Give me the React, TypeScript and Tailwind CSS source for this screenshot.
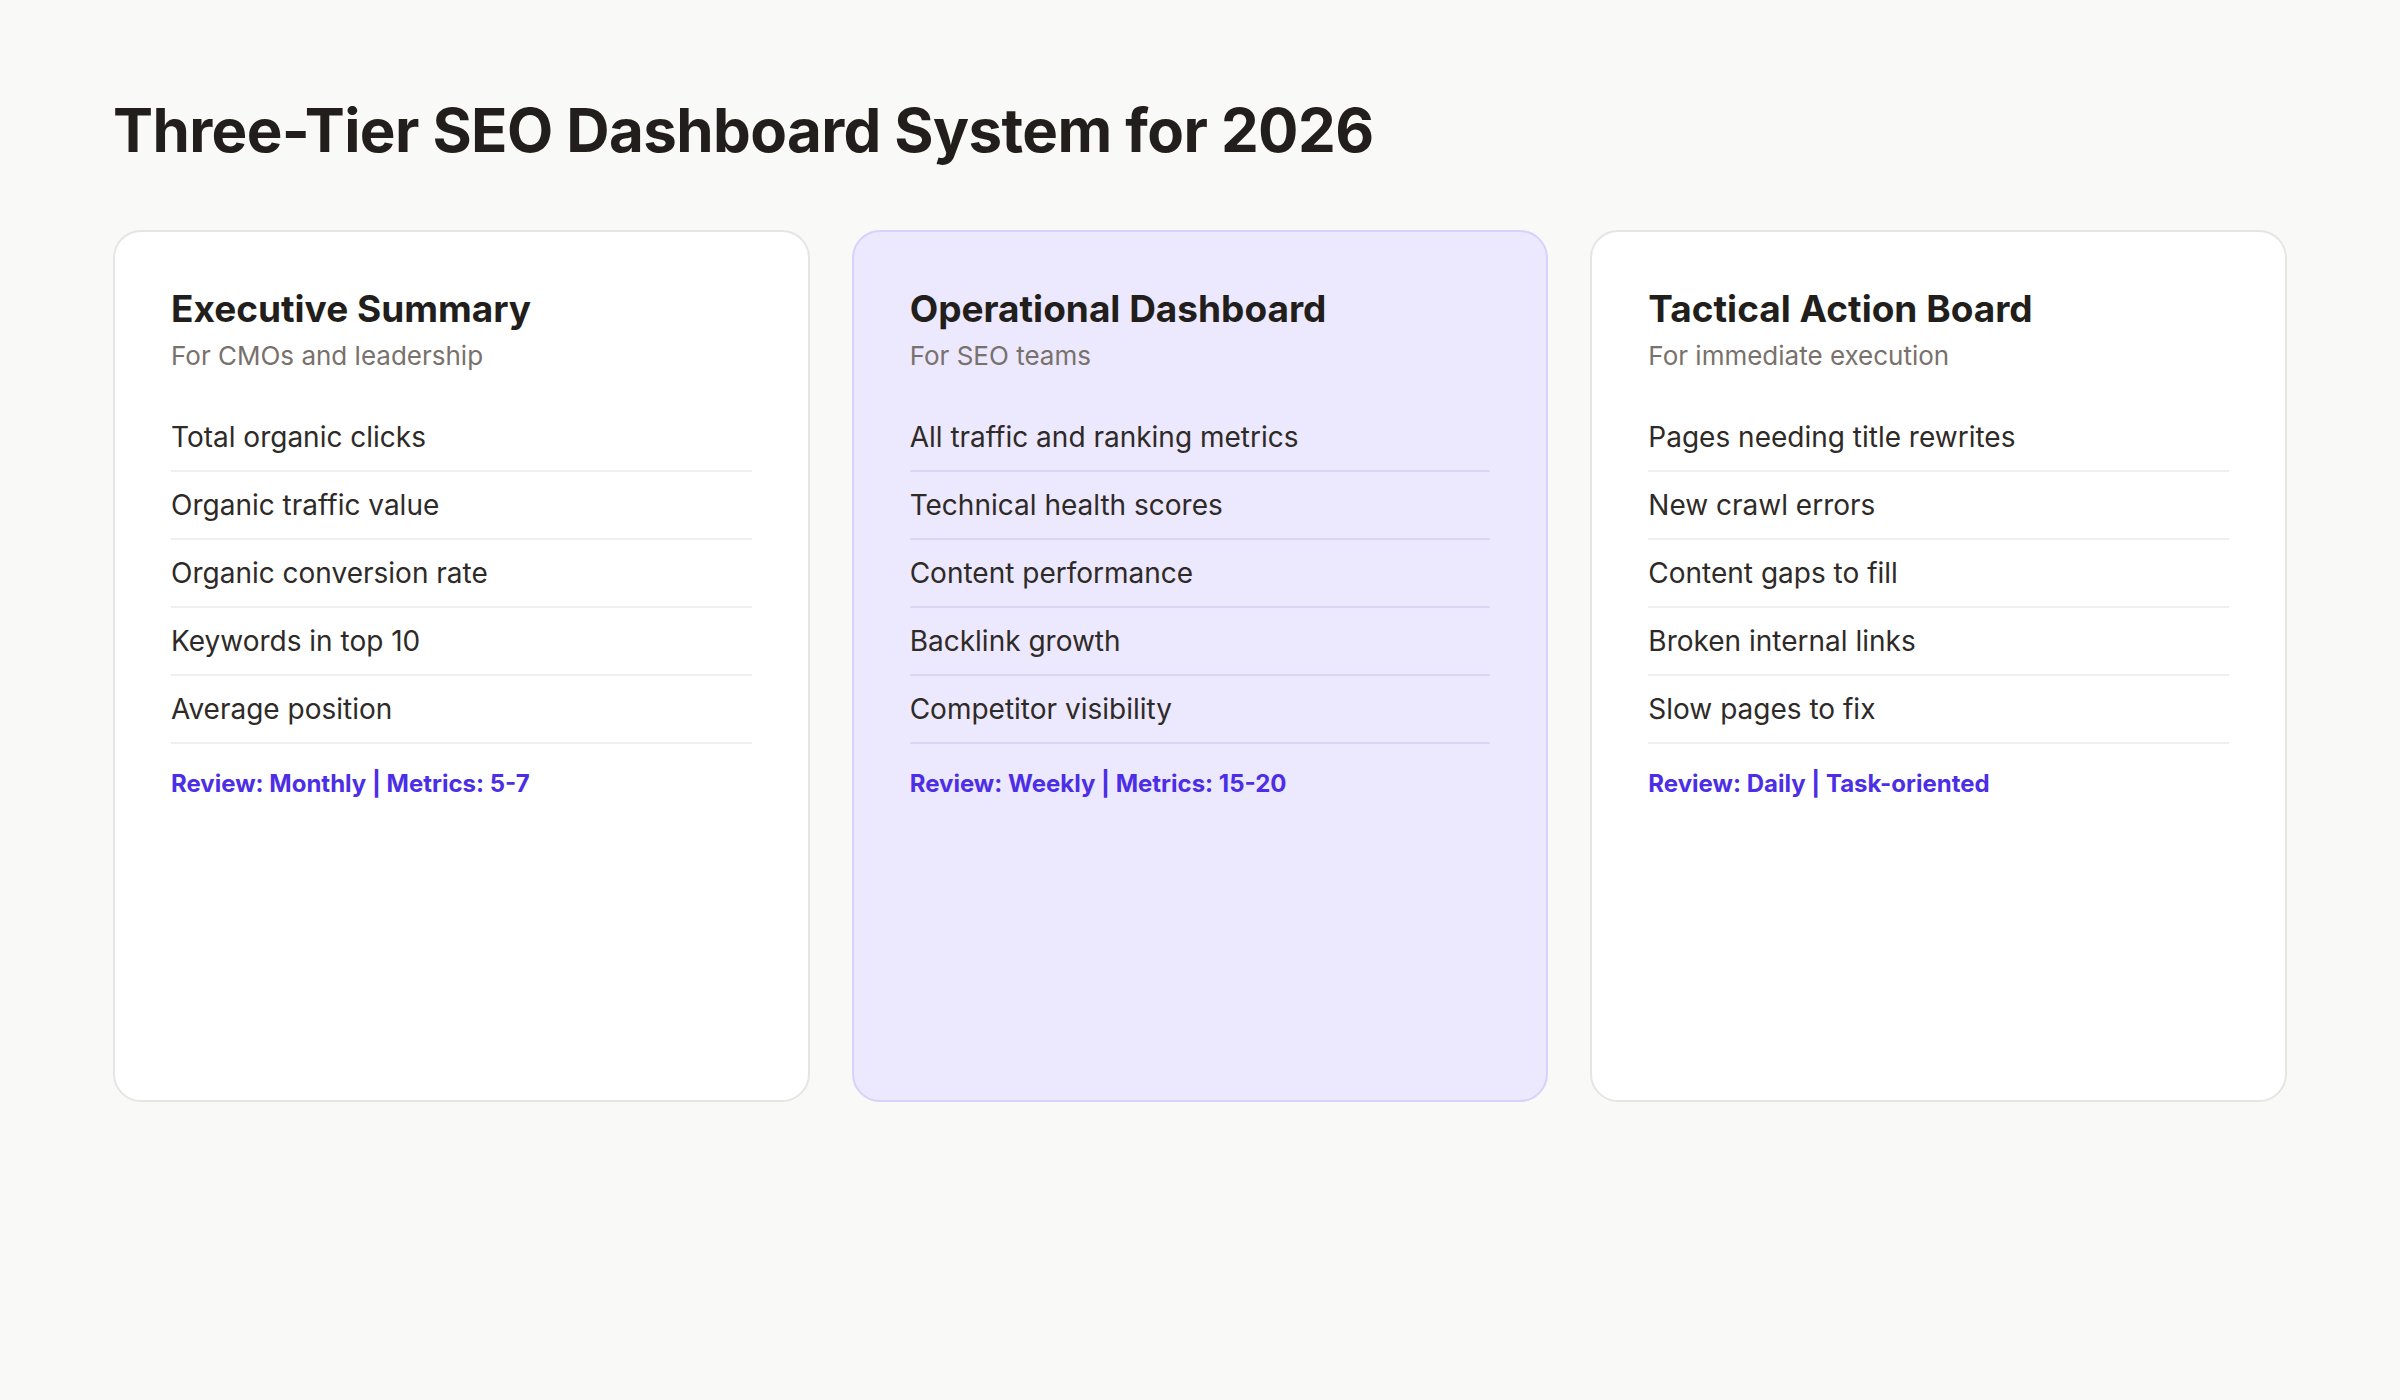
const tiers = [
  {
    title: "Executive Summary",
    audience: "For CMOs and leadership",
    items: ["Total organic clicks", "Organic traffic value", "Organic conversion rate", "Keywords in top 10", "Average position"],
    footer: "Review: Monthly | Metrics: 5-7",
    highlight: false,
  },
  {
    title: "Operational Dashboard",
    audience: "For SEO teams",
    items: ["All traffic and ranking metrics", "Technical health scores", "Content performance", "Backlink growth", "Competitor visibility"],
    footer: "Review: Weekly | Metrics: 15-20",
    highlight: true,
  },
  {
    title: "Tactical Action Board",
    audience: "For immediate execution",
    items: ["Pages needing title rewrites", "New crawl errors", "Content gaps to fill", "Broken internal links", "Slow pages to fix"],
    footer: "Review: Daily | Task-oriented",
    highlight: false,
  },
];

export default function App() {
  return (
    <div
      className="min-h-screen w-full bg-[#f9f9f7] px-[113px] pt-[92px] text-[#292524]"
      style={{ fontFamily: "Inter, 'Liberation Sans', sans-serif" }}
    >
      <h1 className="text-[60px] font-bold leading-[76px] tracking-[-0.01em] text-[#211e1c]">
        Three-Tier SEO Dashboard System for 2026
      </h1>
      <div className="mt-[62px] grid grid-cols-3 gap-[42px]">
        {tiers.map((t) => (
          <div
            key={t.title}
            className={`h-[872px] rounded-[28px] border-2 px-[56px] pt-[52px] ${
              t.highlight ? "border-[#d8d1fa] bg-[#ece8fe]" : "border-[#e7e5e4] bg-white"
            }`}
          >
            <h2 className="text-[37px] font-bold leading-[50px] text-[#211e1c]">{t.title}</h2>
            <p className="mt-[4px] text-[26px] leading-[36px] text-[#78716c]">{t.audience}</p>
            <ul className="mt-[30px]">
              {t.items.map((i) => (
                <li
                  key={i}
                  className={`border-b-2 py-[14px] text-[28px] leading-[38px] text-[#2e2a27] ${
                    t.highlight ? "border-[#dcd6f5]" : "border-[#f0efee]"
                  }`}
                >
                  {i}
                </li>
              ))}
            </ul>
            <p className="mt-[24px] text-[24px] font-bold leading-[32px] text-[#4b2ee6]">{t.footer}</p>
          </div>
        ))}
      </div>
    </div>
  );
}
